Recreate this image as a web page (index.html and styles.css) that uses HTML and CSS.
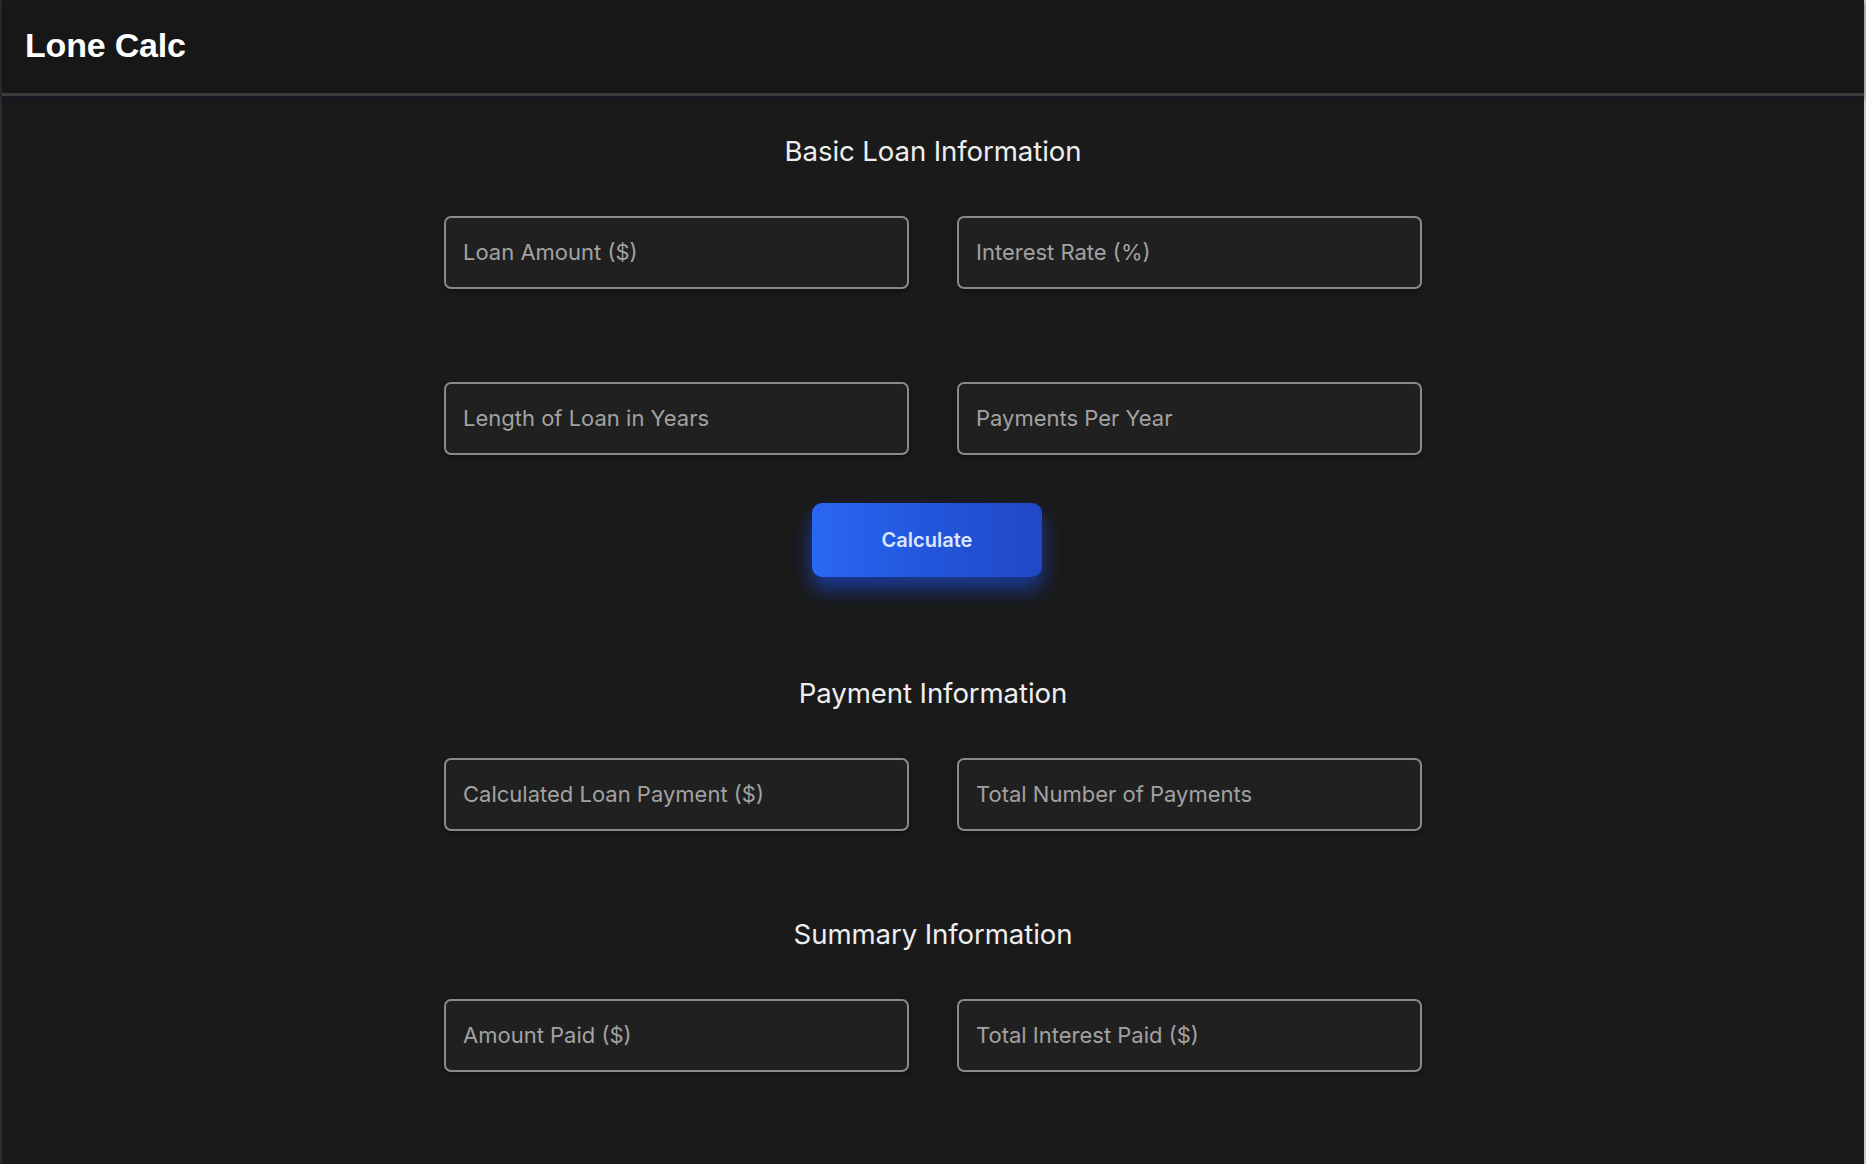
FILE: index.html
```html
<!DOCTYPE html>
<html lang="en">
<head>
<meta charset="utf-8">
<title>Lone Calc</title>
<link rel="stylesheet" href="styles.css">
</head>
<body>
<div class="page">
  <header class="topbar">
    <h1 class="brand">Lone Calc</h1>
  </header>
  <main class="content">
    <section class="section section-basic">
      <h2 class="section-title">Basic Loan Information</h2>
      <div class="fields">
        <input class="field" type="text" placeholder="Loan Amount ($)">
        <input class="field" type="text" placeholder="Interest Rate (%)">
        <input class="field" type="text" placeholder="Length of Loan in Years">
        <input class="field" type="text" placeholder="Payments Per Year">
      </div>
      <div class="actions">
        <button class="btn" type="button">Calculate</button>
      </div>
    </section>
    <section class="section section-payment">
      <h2 class="section-title">Payment Information</h2>
      <div class="fields">
        <input class="field" type="text" placeholder="Calculated Loan Payment ($)">
        <input class="field" type="text" placeholder="Total Number of Payments">
      </div>
    </section>
    <section class="section section-summary">
      <h2 class="section-title">Summary Information</h2>
      <div class="fields">
        <input class="field" type="text" placeholder="Amount Paid ($)">
        <input class="field" type="text" placeholder="Total Interest Paid ($)">
      </div>
    </section>
  </main>
</div>
</body>
</html>
```
FILE: styles.css
```css
* { box-sizing: border-box; }
html, body { margin: 0; padding: 0; height: 100%; }
body {
  background: #1a1a1a;
  font-family: Inter, "Noto Sans", sans-serif;
  color: #ececec;
  overflow: hidden;
}
.page {
  min-height: 1164px;
  border-left: 2px solid #2c2c2c;
  border-right: 2px solid #c8c8c8;
  background: #1a1a1a;
}
.topbar {
  height: 96px;
  background: #171717;
  border-bottom: 3px solid #3b3b3f;
  box-shadow: 0 3px 4px rgba(20, 20, 40, 0.5);
  display: flex;
  align-items: center;
  padding-left: 23px;
  padding-bottom: 2px;
}
.brand {
  margin: 0;
  font-family: "Liberation Sans", Arial, sans-serif;
  font-weight: 700;
  font-size: 34px;
  color: #ffffff;
  letter-spacing: -0.2px;
}
.content {
  display: flex;
  flex-direction: column;
  align-items: center;
  padding-top: 38px;
}
.section {
  display: flex;
  flex-direction: column;
  align-items: center;
  width: 978px;
}
.section-title {
  margin: 0 0 48px;
  font-size: 27.6px;
  line-height: 34px;
  font-weight: 400;
  color: #eeeeee;
  letter-spacing: -0.1px;
}
.section-payment { margin-top: 99px; }
.section-summary { margin-top: 86px; }
.section-summary .section-title { margin-bottom: 48px; }
.fields {
  display: grid;
  grid-template-columns: 465px 465px;
  column-gap: 48px;
  row-gap: 93px;
}
.field {
  height: 73px;
  width: 465px;
  background: #202020;
  border: 2px solid #8a8a8a;
  border-radius: 7px;
  padding: 0 17px 2px;
  font-family: Inter, "Noto Sans", sans-serif;
  font-size: 22px;
  color: #e0e0e0;
  outline: none;
  box-shadow: 0 2px 4px rgba(0, 0, 0, 0.4);
}
.field::placeholder { color: #a2a2a2; }
.actions {
  margin-top: 48px;
  padding-right: 12px;
  display: flex;
  justify-content: center;
}
.btn {
  width: 230px;
  height: 74px;
  border: none;
  border-radius: 10px;
  background: linear-gradient(90deg, #2a67f2 0%, #2356dc 50%, #2048c6 100%);
  color: #dce6ff;
  font-family: Inter, "Noto Sans", sans-serif;
  font-weight: 600;
  font-size: 20px;
  box-shadow: 0 12px 20px rgba(30, 80, 235, 0.6);
  cursor: pointer;
}
```
